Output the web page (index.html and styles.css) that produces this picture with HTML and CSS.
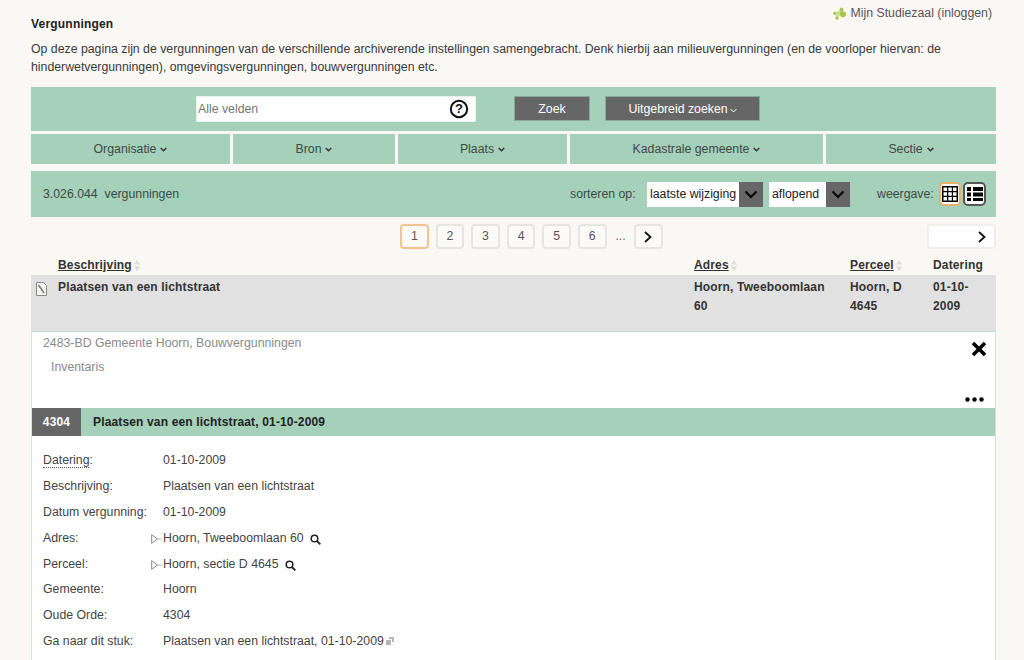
FILE: index.html
```html
<!DOCTYPE html>
<html lang="nl">
<head>
<meta charset="utf-8">
<title>Vergunningen</title>
<link rel="stylesheet" href="styles.css">
</head>
<body>
<main class="page">
  <a class="studiezaal">
    <svg class="sz-icon" width="14" height="13" viewBox="0 0 14 13"><g fill="#a9c54a"><circle cx="8.500" cy="2.500" r="1.900"/><circle cx="1.800" cy="6.300" r="1.600"/><circle cx="10" cy="7.200" r="3"/><circle cx="4" cy="11" r="1.700"/><path d="M2 6 8.500 2 10 6 4 11z" opacity=".55"/></g></svg>
    Mijn Studiezaal (inloggen)
  </a>
  <h1 class="title">Vergunningen</h1>
  <p class="intro">Op deze pagina zijn de vergunningen van de verschillende archiverende instellingen samengebracht. Denk hierbij aan milieuvergunningen (en de voorloper hiervan: de hinderwetvergunningen), omgevingsvergunningen, bouwvergunningen etc.</p>

  <section class="searchbar">
    <div class="searchbox">
      <span class="placeholder">Alle velden</span>
      <svg width="20" height="20" viewBox="0 0 20 20"><circle cx="10" cy="10" r="8.200" fill="#fff" stroke="#111" stroke-width="2"/><text x="10" y="14.200" text-anchor="middle" class="qmark">?</text></svg>
    </div>
    <button class="btn btn-zoek">Zoek</button>
    <button class="btn btn-adv">Uitgebreid zoeken<svg class="chev-thin" width="7" height="5" viewBox="0 0 7 5"><path d="M.5 1l3 3 3-3" fill="none" stroke="#fff" stroke-width="1"/></svg></button>
  </section>

  <nav class="facets">
    <div class="facet f1">Organisatie <svg class="chev" width="7" height="5" viewBox="0 0 7 5"><path d="M.7 1l2.800 2.800L6.300 1" fill="none" stroke="#333" stroke-width="1.400"/></svg></div>
    <div class="facet f2">Bron <svg class="chev" width="7" height="5" viewBox="0 0 7 5"><path d="M.7 1l2.800 2.800L6.300 1" fill="none" stroke="#333" stroke-width="1.400"/></svg></div>
    <div class="facet f3">Plaats <svg class="chev" width="7" height="5" viewBox="0 0 7 5"><path d="M.7 1l2.800 2.800L6.300 1" fill="none" stroke="#333" stroke-width="1.400"/></svg></div>
    <div class="facet f4">Kadastrale gemeente <svg class="chev" width="7" height="5" viewBox="0 0 7 5"><path d="M.7 1l2.800 2.800L6.300 1" fill="none" stroke="#333" stroke-width="1.400"/></svg></div>
    <div class="facet f5">Sectie <svg class="chev" width="7" height="5" viewBox="0 0 7 5"><path d="M.7 1l2.800 2.800L6.300 1" fill="none" stroke="#333" stroke-width="1.400"/></svg></div>
  </nav>

  <section class="countbar">
    <span class="count">3.026.044&nbsp; vergunningen</span>
    <span class="sortlabel">sorteren op:</span>
    <div class="select sel1"><span>laatste wijziging</span><i class="sel-arrow"><svg width="14" height="9" viewBox="0 0 14 9"><path d="M1.500 1.500 7 7l5.500-5.500" fill="none" stroke="#000" stroke-width="2"/></svg></i></div>
    <div class="select sel2"><span>aflopend</span><i class="sel-arrow"><svg width="14" height="9" viewBox="0 0 14 9"><path d="M1.500 1.500 7 7l5.500-5.500" fill="none" stroke="#000" stroke-width="2"/></svg></i></div>
    <span class="viewlabel">weergave:</span>
    <div class="viewbtn active"><svg width="16" height="16" viewBox="0 0 16 16"><path d="M0 0h16v16H0z" fill="#000"/><path d="M1.500 1.500h3.500v3.500H1.500zM6.300 1.500h3.500v3.500H6.300zM11 1.500h3.500v3.500H11zM1.500 6.300h3.500v3.500H1.500zM6.300 6.300h3.500v3.500H6.300zM11 6.300h3.500v3.500H11zM1.500 11h3.500v3.500H1.500zM6.300 11h3.500v3.500H6.300zM11 11h3.500v3.500H11z" fill="#fff"/></svg></div>
    <div class="viewbtn"><svg width="16" height="16" viewBox="0 0 16 16"><path d="M0 1h4v4H0zM6 1h10v4H6zM0 6.500h4v4H0zM6 6.500h10v4H6zM0 12h4v3H0zM6 12h10v3H6z" fill="#000"/></svg></div>
  </section>

  <div class="pagerrow">
    <div class="pager">
      <span class="pg current">1</span>
      <span class="pg">2</span>
      <span class="pg">3</span>
      <span class="pg">4</span>
      <span class="pg">5</span>
      <span class="pg">6</span>
      <span class="dots">...</span>
      <span class="pg pg-next"><svg width="8" height="12" viewBox="0 0 8 12"><path d="M1 1l5.500 5L1 11" fill="none" stroke="#111" stroke-width="1.800"/></svg></span>
    </div>
    <span class="pg-wide"><svg width="8" height="12" viewBox="0 0 8 12"><path d="M1 1l5.500 5L1 11" fill="none" stroke="#111" stroke-width="1.800"/></svg></span>
  </div>

  <div class="thead">
    <span></span>
    <span class="th"><u>Beschrijving</u><svg class="sort" width="6" height="11" viewBox="0 0 6 11"><path d="M3 0l3 4.500H0zM3 11l3-4.500H0z" fill="#dcdcdc"/></svg></span>
    <span class="th"><u>Adres</u><svg class="sort" width="6" height="11" viewBox="0 0 6 11"><path d="M3 0l3 4.500H0zM3 11l3-4.500H0z" fill="#dcdcdc"/></svg></span>
    <span class="th"><u>Perceel</u><svg class="sort" width="6" height="11" viewBox="0 0 6 11"><path d="M3 0l3 4.500H0zM3 11l3-4.500H0z" fill="#dcdcdc"/></svg></span>
    <span class="th">Datering</span>
  </div>
  <div class="trow">
    <span class="doc"><svg width="11" height="14" viewBox="0 0 11 14"><path d="M.5.500h7l3 3v10H.5z" fill="#f4f4f0" stroke="#888"/><path d="M2.500 3 8 11" stroke="#777" stroke-width="1.500"/></svg></span>
    <span>Plaatsen van een lichtstraat</span>
    <span>Hoorn, Tweeboomlaan 60</span>
    <span>Hoorn, D 4645</span>
    <span>01-10-2009</span>
  </div>

  <section class="detail">
    <div class="crumbs">
      <div class="crumb1">2483-BD Gemeente Hoorn, Bouwvergunningen</div>
      <div class="crumb2">Inventaris</div>
      <svg class="close" width="16" height="16" viewBox="0 0 16 16"><path d="M2 2l12 12M14 2 2 14" stroke="#000" stroke-width="3.600"/></svg>
      <svg class="more" width="19" height="5" viewBox="0 0 19 5"><circle cx="2.500" cy="2.500" r="2.200"/><circle cx="9.500" cy="2.500" r="2.200"/><circle cx="16.500" cy="2.500" r="2.200"/></svg>
    </div>
    <div class="recordbar"><span class="recnum">4304</span><span class="rectitle">Plaatsen van een lichtstraat, 01-10-2009</span></div>
    <dl class="fields">
      <dt><span class="dotted">Datering</span>:</dt><dd>01-10-2009</dd>
      <dt>Beschrijving:</dt><dd>Plaatsen van een lichtstraat</dd>
      <dt>Datum vergunning:</dt><dd>01-10-2009</dd>
      <dt>Adres:</dt><dd class="expand"><svg class="tri" width="11" height="10" viewBox="0 0 11 10"><path d="M.7.700 6.500 5 .7 9.300z" fill="none" stroke="#888"/><path d="M6.500 5H11" stroke="#bbb"/></svg>Hoorn, Tweeboomlaan 60<svg class="mag" width="11" height="11" viewBox="0 0 11 11"><circle cx="4.500" cy="4.500" r="3.300" fill="none" stroke="#222" stroke-width="1.500"/><path d="M7 7l3.300 3.300" stroke="#222" stroke-width="1.800"/></svg></dd>
      <dt>Perceel:</dt><dd class="expand"><svg class="tri" width="11" height="10" viewBox="0 0 11 10"><path d="M.7.700 6.500 5 .7 9.300z" fill="none" stroke="#888"/><path d="M6.500 5H11" stroke="#bbb"/></svg>Hoorn, sectie D 4645<svg class="mag" width="11" height="11" viewBox="0 0 11 11"><circle cx="4.500" cy="4.500" r="3.300" fill="none" stroke="#222" stroke-width="1.500"/><path d="M7 7l3.300 3.300" stroke="#222" stroke-width="1.800"/></svg></dd>
      <dt>Gemeente:</dt><dd>Hoorn</dd>
      <dt>Oude Orde:</dt><dd>4304</dd>
      <dt>Ga naar dit stuk:</dt><dd>Plaatsen van een lichtstraat, 01-10-2009<svg class="ext" width="8" height="8" viewBox="0 0 8 8"><path d="M3 0h5v5H6V2H3zM0 3h5v5H0z" fill="#b5b5b5"/></svg></dd>
    </dl>
  </section>
</main>
</body>
</html>
```
FILE: styles.css
```css
* { box-sizing: border-box; }
html, body { margin: 0; height: 660px; overflow: hidden; }
body {
  background: #f9f8f5;
  color: #3a3a3a;
  font: 12.3px/19px "Liberation Sans", Arial, sans-serif;
}
.page { position: relative; width: 965px; margin-left: 31px; padding-top: 15px; }
.studiezaal {
  position: absolute; top: 4px; right: 4px;
  display: flex; align-items: center; gap: 4px;
  color: #555;
}
.sz-icon { display: block; }
.title { margin: 0; font-size: 12px; line-height: 19px; font-weight: bold; color: #222; letter-spacing: .2px; }
.intro { margin: 6px 0 11px; width: 940px; line-height: 18px; }

.searchbar {
  height: 44px; background: #a5d1bb;
  display: flex; padding: 9px 0 0 165px;
}
.searchbox {
  width: 280px; height: 26px; background: #fff;
  border: 1px solid #e8f2ed;
  display: flex; align-items: center; justify-content: space-between;
  padding: 0 6px 0 1px;
}
.placeholder { color: #777; }
.qmark { font: bold 13px "Liberation Sans", sans-serif; fill: #111; }
.btn {
  height: 25px; border: 1px solid #8aa99a; background: #666; color: #fff;
  font: 12.3px "Liberation Sans", Arial, sans-serif; padding: 0;
}
.btn-zoek { width: 76px; margin-left: 38px; }
.btn-adv { width: 155px; margin-left: 15px; }
.chev-thin { margin-left: 2px; }

.facets { display: flex; gap: 3px; margin-top: 3px; }
.facet {
  height: 30px; background: #a5d1bb; color: #3d4a44;
  display: flex; align-items: center; justify-content: center; gap: 4px;
}
.f1 { width: 199px; }
.f2 { width: 162px; }
.f3 { width: 169px; }
.f4 { width: 253px; }
.f5 { width: 170px; }

.countbar {
  height: 46px; margin-top: 7px; background: #a5d1bb;
  display: flex; align-items: center; padding-right: 10px; color: #3d4a44;
}
.count { margin-left: 12px; }
.sortlabel { margin-left: auto; width: 77px; }
.select {
  height: 25px; background: #fff; color: #222;
  display: flex; align-items: center; justify-content: space-between; padding-left: 3px;
}
.sel1 { width: 116px; }
.sel2 { width: 81px; margin-left: 6px; }
.sel-arrow {
  width: 24px; height: 25px; background: #666;
  display: flex; align-items: center; justify-content: center;
}
.viewlabel { margin-left: 27px; width: 62px; }
.viewbtn {
  width: 23px; height: 24px; background: #fff; border: 2px solid #555; border-radius: 5px;
  display: flex; align-items: center; justify-content: center;
}
.viewbtn.active { width: 22px; border-color: #e8b26b; margin-right: 2px; }

.pagerrow { display: flex; justify-content: space-between; margin-top: 7px; height: 24px; position: relative; }
.pager { display: flex; margin-left: 369px; }
.pg {
  width: 28.6px; height: 25px; margin-right: 7px;
  display: flex; align-items: center; justify-content: center;
  border: 2px solid #e5e5e2; border-radius: 4px; color: #555; background: #fbfaf8;
}
.pg.current { border-color: #eec58f; }
.dots { width: 14px; margin-right: 6px; text-align: center; line-height: 25px; color: #666; }
.pg-next { width: 29px; }
.pg-wide {
  width: 69px; height: 25px; background: #fff;
  border: 2px solid #eeeeea; border-radius: 4px;
  display: flex; align-items: center; justify-content: flex-end; padding-right: 8px;
}

.thead, .trow {
  display: grid; grid-template-columns: 27px 636px 156px 83px 63px;
}
.thead { margin-top: 7px; height: 20px; font-weight: bold; font-size: 12px; letter-spacing: .15px; color: #333; align-items: center; }
.th { display: flex; align-items: center; }
.sort { margin-left: 2px; }
.trow { height: 56px; background: #e1e1e1; font-weight: bold; font-size: 12px; letter-spacing: .15px; color: #333; padding-top: 3px; }
.trow > span { padding-right: 12px; }
.doc { padding: 4px 0 0 5px; }
.doc svg { display: block; }

.detail { border-left: 1px solid #cfe5da; border-right: 1px solid #cfe5da; border-top: 1px solid #bcdccc; background: #fff; height: 340px; }
.crumbs { position: relative; height: 76px; color: #8a8a8a; padding: 2px 0 0 11px; }
.crumb1 { line-height: 19px; }
.crumb2 { line-height: 19px; margin: 5px 0 0 8px; }
.close { position: absolute; top: 9px; right: 8px; }
.more { position: absolute; bottom: 6px; right: 11px; }
.recordbar { height: 28px; background: #a5d1bb; display: flex; align-items: stretch; font-weight: bold; font-size: 12px; letter-spacing: .15px; }
.recnum { width: 49px; background: #666; color: #fff; display: flex; align-items: center; justify-content: center; }
.rectitle { display: flex; align-items: center; margin-left: 12px; color: #222; }

.fields {
  margin: 0; padding: 12px 0 0 11px;
  display: grid; grid-template-columns: 120px 1fr; grid-auto-rows: 25.9px;
  color: #444;
}
.fields dt, .fields dd { margin: 0; line-height: 25.9px; }
.dotted { border-bottom: 1px dotted #555; }
.expand { position: relative; display: flex; align-items: center; }
.tri { position: absolute; left: -12px; top: 8px; }
.mag { margin-left: 6px; margin-top: 1px; }
.ext { margin-left: 2px; }
```
